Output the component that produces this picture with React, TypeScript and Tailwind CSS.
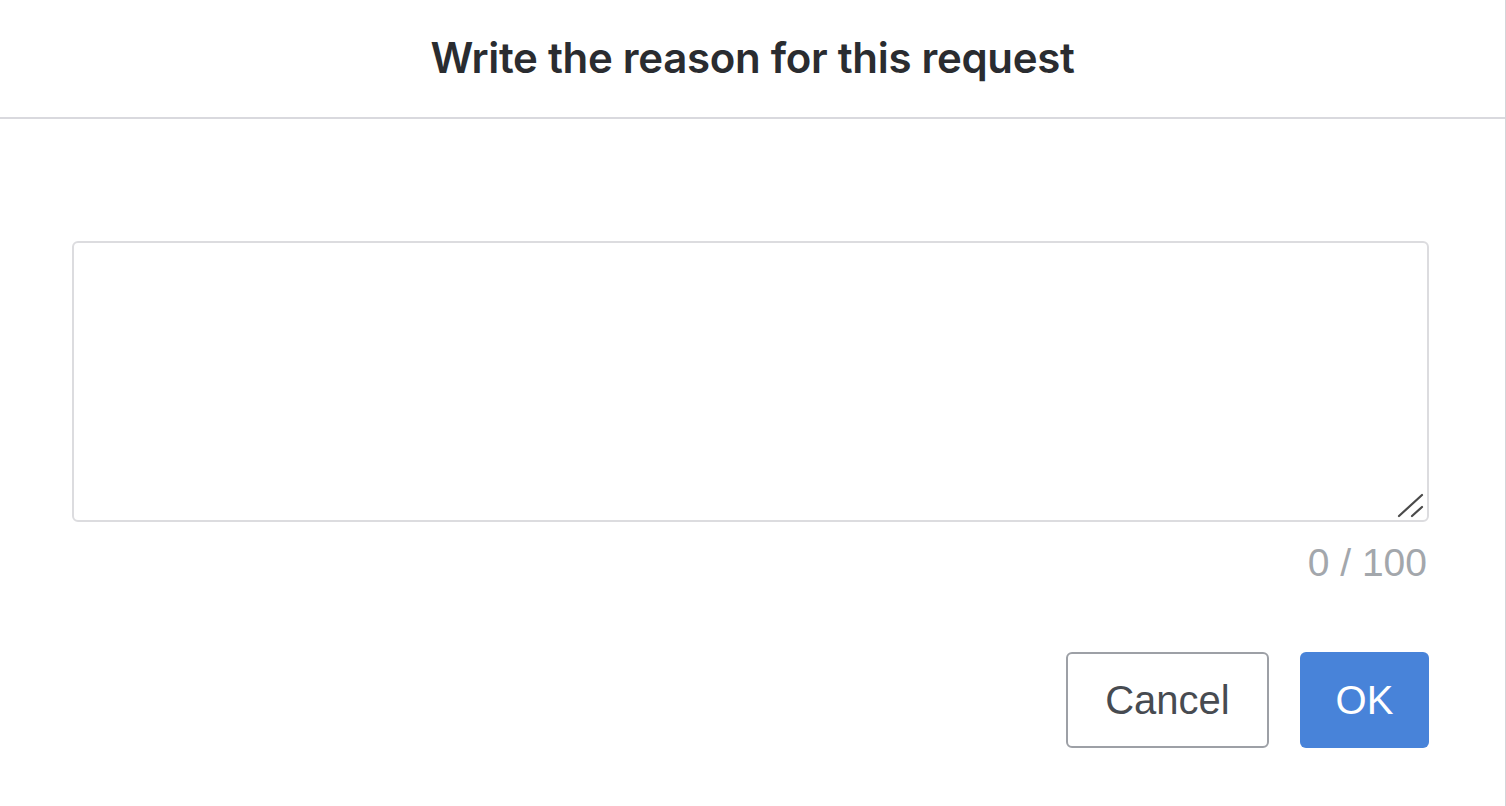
import { useState } from "react";

const MAX_LENGTH = 100;

export default function App() {
  const [reason, setReason] = useState("");

  return (
    <div className="min-h-[806px] w-full bg-white border-r border-[#d4d4d8] font-['Liberation_Sans',Arial,sans-serif]">
      {/* Header */}
      <div className="h-[119px] border-b-[2px] border-[#d9d9de] flex items-center justify-center pb-[2px]">
        <h2 className="text-[42px] font-semibold text-[#2a2c30] tracking-[-0.3px] font-['Inter',sans-serif]">
          Write the reason for this request
        </h2>
      </div>

      {/* Body */}
      <div className="pl-[72px] pr-[76px] pt-[122px]">
        <div className="relative">
          <textarea
            value={reason}
            maxLength={MAX_LENGTH}
            onChange={(e) => setReason(e.target.value)}
            className="block w-full h-[281px] resize-none rounded-[6px] border-[2px] border-[#dcdcdf] bg-white outline-none px-4 py-3 text-[36px] text-[#333]"
          />
          {/* resize grip */}
          <svg
            className="absolute right-[4px] bottom-[4px] pointer-events-none"
            width="28"
            height="26"
            viewBox="0 0 28 26"
          >
            <path d="M2 24 L25 3" stroke="#4a4a4a" strokeWidth="2.2" strokeLinecap="round" />
            <path d="M15 24 L25 15" stroke="#4a4a4a" strokeWidth="2.2" strokeLinecap="round" />
          </svg>
        </div>

        <div className="mt-[17px] pr-[2px] text-right text-[39px] leading-[48px] text-[#a3a7ac]">
          {reason.length} / {MAX_LENGTH}
        </div>

        {/* Footer buttons */}
        <div className="mt-[65px] flex justify-end gap-[31px]">
          <button className="w-[203px] h-[96px] rounded-[6px] border-[2px] border-[#9da0a6] bg-white text-[40px] text-[#474b51]">
            Cancel
          </button>
          <button className="w-[129px] h-[96px] rounded-[6px] bg-[#4883d9] text-[40px] text-white">
            OK
          </button>
        </div>
      </div>
    </div>
  );
}
